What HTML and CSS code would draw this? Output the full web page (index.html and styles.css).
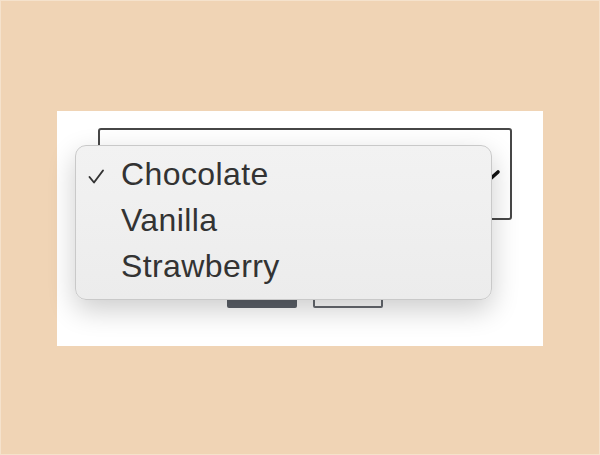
FILE: index.html
```html
<!DOCTYPE html>
<html lang="en">
<head>
    <meta charset="UTF-8">
    <meta name="viewport" content="width=device-width, initial-scale=1.0">
    <title>Select menu</title>
    <link rel="stylesheet" href="styles.css">
</head>
<body>
    <div class="stage">
        <div class="panel">
            <div class="select">
                <svg class="chevron" width="24" height="16" viewBox="0 0 24 16">
                    <path d="M3 4 L12 12 L21 4" fill="none" stroke="#111" stroke-width="3.6" stroke-linecap="round" stroke-linejoin="round"/>
                </svg>
            </div>

            <div class="actions">
                <button class="btn btn-primary"></button>
                <button class="btn btn-outline"></button>
            </div>

            <!-- open dropdown lies over the select -->
            <ul class="menu">
                <li class="menu-item selected">
                    <svg class="check" width="17" height="15" viewBox="0 0 17 15">
                        <path d="M1.5 8 L6 13.5 L15 1.5" fill="none" stroke="#333" stroke-width="1.9" stroke-linecap="round" stroke-linejoin="round"/>
                    </svg>
                    Chocolate
                </li>
                <li class="menu-item">Vanilla</li>
                <li class="menu-item">Strawberry</li>
            </ul>
        </div>
    </div>
</body>
</html>
```

FILE: styles.css
```css
body {
    margin: 0;
    font-family: "Liberation Sans", Arial, sans-serif;
    background-color: #f0d4b5;
}
.stage {
    box-sizing: border-box;
    width: 600px;
    height: 455px;
    padding: 110px 0 0 56px;
    border: 1px solid #f5e2cc;
}
.panel {
    position: relative;
    box-sizing: border-box;
    width: 486px;
    height: 235px;
    padding: 17px 0 0 41px;
    background: #ffffff;
}
.select {
    position: relative;
    box-sizing: border-box;
    width: 414px;
    height: 92px;
    border: 2px solid #474747;
    border-radius: 3px;
    background: #fff;
}
.chevron {
    position: absolute;
    right: 9px;
    top: 38px;
}
.actions {
    display: flex;
    gap: 16px;
    margin: 48px 0 0 129px;
}
.btn {
    box-sizing: border-box;
    width: 70px;
    height: 40px;
    border-radius: 2px;
    padding: 0;
}
.btn-primary {
    background: #5b6068;
    border: none;
}
.btn-outline {
    background: #fff;
    border: 2px solid #666a70;
}
.menu {
    position: absolute;
    left: 18px;
    top: 34px;
    box-sizing: border-box;
    width: 417px;
    height: 155px;
    margin: 0;
    padding: 5px 0 0 45px;
    list-style: none;
    background: linear-gradient(#f2f2f2, #ececec);
    border: 1px solid #c9c9c9;
    border-radius: 11px;
    box-shadow: 0 10px 28px rgba(0, 0, 0, 0.2);
}
.menu-item {
    position: relative;
    font-size: 32px;
    line-height: 46px;
    color: #333;
    letter-spacing: 0.4px;
}
.check {
    position: absolute;
    left: -33px;
    top: 18px;
}
```
